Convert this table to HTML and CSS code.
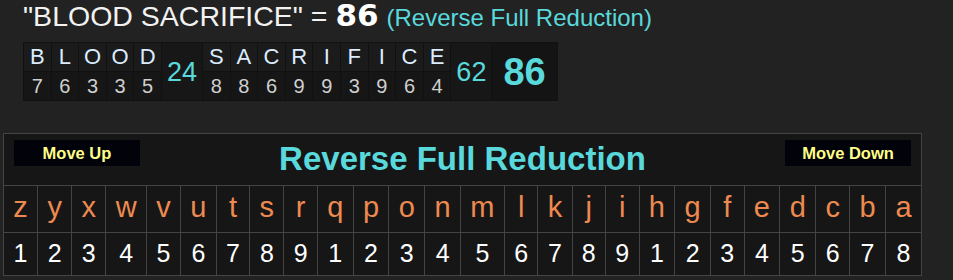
FILE: index.html
```html
<!DOCTYPE html>
<html>
<head>
<meta charset="utf-8">
<link rel="stylesheet" href="styles.css">
</head>
<body>
<div class="result">
  <span class="phrase">"BLOOD SACRIFICE" = </span><span class="total">86</span> <span class="cipher">(Reverse Full Reduction)</span>
</div>
<table class="breakdown">
  <tr class="chars">
    <td>B</td><td>L</td><td>O</td><td>O</td><td>D</td>
    <td class="sum" rowspan="2">24</td>
    <td>S</td><td>A</td><td>C</td><td>R</td><td>I</td><td>F</td><td>I</td><td>C</td><td>E</td>
    <td class="sum" rowspan="2">62</td>
    <td class="grand" rowspan="2">86</td>
  </tr>
  <tr class="vals">
    <td>7</td><td>6</td><td>3</td><td>3</td><td>5</td>
    <td>8</td><td>8</td><td>6</td><td>9</td><td>9</td><td>3</td><td>9</td><td>6</td><td>4</td>
  </tr>
</table>
<table class="chart">
  <tr class="head">
    <td colspan="26">
      <div class="head-bar">
        <button class="move">Move Up</button>
        <span class="chart-title">Reverse Full Reduction</span>
        <button class="move">Move Down</button>
      </div>
    </td>
  </tr>
  <tr class="letters">
    <td>z</td><td>y</td><td>x</td><td>w</td><td>v</td><td>u</td><td>t</td><td>s</td><td>r</td><td>q</td><td>p</td><td>o</td><td>n</td><td>m</td><td>l</td><td>k</td><td>j</td><td>i</td><td>h</td><td>g</td><td>f</td><td>e</td><td>d</td><td>c</td><td>b</td><td>a</td>
  </tr>
  <tr class="numbers">
    <td>1</td><td>2</td><td>3</td><td>4</td><td>5</td><td>6</td><td>7</td><td>8</td><td>9</td><td>1</td><td>2</td><td>3</td><td>4</td><td>5</td><td>6</td><td>7</td><td>8</td><td>9</td><td>1</td><td>2</td><td>3</td><td>4</td><td>5</td><td>6</td><td>7</td><td>8</td>
  </tr>
</table>
</body>
</html>
```

FILE: styles.css
```css
html, body {
  margin: 0;
  padding: 0;
  background: #222222;
  font-family: "Liberation Sans", Arial, sans-serif;
}

.result {
  margin-left: 23px;
  height: 32px;
  font-size: 28.5px;
  line-height: 32px;
  white-space: nowrap;
}

.phrase {
  color: #f2f2f2;
}

.total {
  font-family: "DejaVu Sans", "Liberation Sans", sans-serif;
  font-size: 31px;
  font-weight: bold;
  line-height: 1;
  color: #ffffff;
}

.cipher {
  font-size: 24px;
  color: #5ad9dc;
}

.breakdown {
  margin: 10px 0 0 23px;
  border-collapse: collapse;
  background: #141414;
}

.breakdown td {
  padding: 0;
  text-align: center;
  border: 1px solid #111111;
}

.breakdown .chars td {
  width: 26.6px;
  height: 28px;
  font-size: 22px;
  line-height: 24px;
  color: #dcecff;
  background: #1b1b1b;
}

.breakdown .vals td {
  width: 26.6px;
  height: 28px;
  font-size: 20px;
  line-height: 24px;
  color: #cfcfcf;
  background: #161616;
}

.breakdown td.sum {
  width: auto;
  padding: 0 5px;
  font-size: 27px;
  color: #5ad9dc;
  background: #171717;
}

.breakdown td.grand {
  width: auto;
  padding: 0 11px;
  font-size: 38px;
  font-weight: bold;
  color: #5ad9dc;
  background: #141414;
}

.chart {
  margin: 32px 0 0 3px;
  width: 919px;
  border-collapse: collapse;
  background: #161616;
  border: 1px solid #444444;
}

.chart td {
  border: 1px solid #444444;
  text-align: center;
  padding: 0 9px;
}

.head td {
  height: 51px;
  padding: 0;
  vertical-align: top;
}

.head-bar {
  display: grid;
  grid-template-columns: 126px 1fr 126px;
  padding: 6px 10px 0 10px;
}

.move {
  height: 26px;
  margin: 0;
  padding: 0;
  border: none;
  background: #02020a;
  color: #ffff88;
  font-family: "Liberation Sans", Arial, sans-serif;
  font-size: 16.5px;
  font-weight: bold;
}

.chart-title {
  text-align: center;
  font-size: 33px;
  font-weight: bold;
  line-height: 38px;
  margin-top: 0;
  color: #5ad9dc;
}

.letters td {
  font-size: 29px;
  line-height: 33px;
  padding-top: 5px;
  padding-bottom: 8px;
  color: #ee8a50;
}

.numbers td {
  font-size: 25px;
  line-height: 28px;
  padding-top: 6px;
  padding-bottom: 8px;
  color: #ffffff;
}
```
